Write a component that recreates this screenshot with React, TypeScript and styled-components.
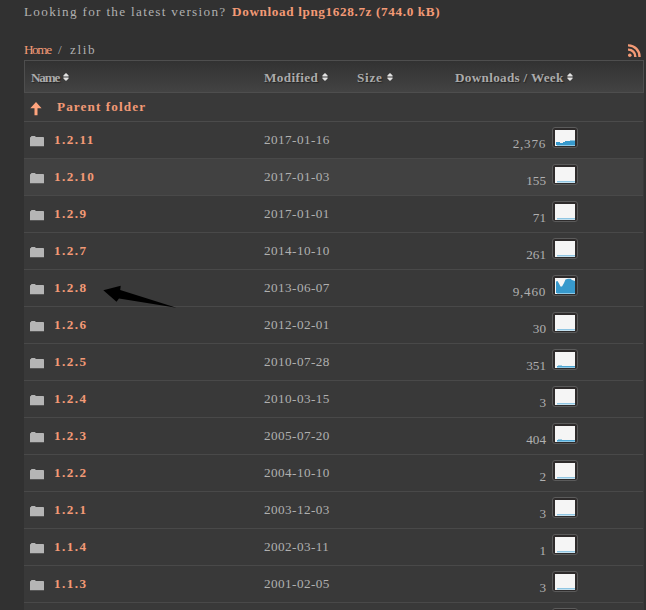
import React from "react";
import styled, { createGlobalStyle } from "styled-components";

const Global = createGlobalStyle`
  html, body { margin: 0; background: #313131; }
  body { overflow: hidden; }
  * { box-sizing: border-box; }
`;

const Page = styled.main`
  height: 610px;
  overflow: hidden;
  padding: 0 2px 0 24px;
  background: #313131;
  color: #b0b0b0;
  font: 13.2px/18px "Liberation Serif", serif;
`;

const Text = styled.span<{ $track?: number }>`
  white-space: pre;
  letter-spacing: ${(p) => p.$track ?? 0}px;
`;

const Link = styled.a<{ $track?: number; $bold?: boolean }>`
  color: #f39a76;
  white-space: pre;
  font-weight: ${(p) => (p.$bold ? 700 : 400)};
  letter-spacing: ${(p) => p.$track ?? 0}px;
`;

const Latest = styled.div`
  display: flex;
  height: 41px;
  padding-top: 3px;
`;

const LatestLabel = styled.div`
  width: 208px;
`;

const Crumbs = styled.div`
  display: flex;
  height: 19px;
  & > svg { margin: 3px 3px 0 auto; }
`;

const Crumb = styled.div<{ $w: number }>`
  width: ${(p) => p.$w}px;
`;

const Table = styled.div`
  width: 620px;
  background: #393939;
`;

const columns = `
  display: grid;
  grid-template-columns: 240px 93px 98px 189px;
`;

const HeadRow = styled.div`
  ${columns}
  grid-template-columns: 239px 93px 98px 188px;
  height: 33px;
  border: 1px solid #4e4e4e;
  background: linear-gradient(#323232, #434343);
  font-weight: 700;
  color: #ababab;
  text-shadow: 1px 1px 1px #222;
`;

const HeadCell = styled.div<{ $pad: number; $w: number }>`
  display: flex;
  padding: 8px 0 0 ${(p) => p.$pad}px;
  & > span { width: ${(p) => p.$w}px; }
  & > svg { margin-top: 4px; }
`;

const ParentRow = styled.div`
  display: flex;
  height: 29px;
  margin-right: 1px;
  padding: 5px 0 0 6px;
  border-bottom: 1px solid #4b4b4b;
  & > svg { margin: 4px 15px 0 0; }
`;

const Row = styled.div<{ $active?: boolean }>`
  ${columns}
  height: 37px;
  margin-right: 1px;
  border-bottom: 1px solid #494949;
  background: ${(p) => (p.$active ? "#414141" : "#393939")};
`;

const NameCell = styled.div`
  position: relative;
  display: flex;
  padding: 9px 0 0 6px;
  & > svg:first-child { margin: 5px 10px 0 0; }
`;

const Cell = styled.div`
  padding-top: 9px;
`;

const CountCell = styled.div`
  display: flex;
  padding-top: 5px;
`;

const Count = styled.div`
  width: 91px;
  padding-top: 8px;
  text-align: right;
`;

const Thumb = styled.div`
  width: 26px;
  height: 21px;
  margin-left: 6px;
  padding: 2px;
  border: 1px solid #5b5b5b;
  border-radius: 3px;
  background: #2e2b2b;
  & > svg { display: block; }
`;

const Pointer = styled.svg`
  position: absolute;
  left: 79px;
  top: 15px;
`;

const SortIcon = () => (
  <svg width="7" height="9" viewBox="0 0 7 9" fill="#e2e2e2">
    <path d="M3 0 5.6 2.6V3.5H.4V2.6zM.4 4.5H5.6v.9L3 8 .4 5.4z" />
  </svg>
);

const FolderIcon = () => (
  <svg width="14" height="11" viewBox="0 0 14 11" fill="#b5b5b5">
    <path d="M0 1.8Q0 1 .8 1H1L1.4 0H5l.8 1H13.2q.8 0 .8.8V10.3H0z" />
  </svg>
);

const UpIcon = () => (
  <svg width="12" height="14" viewBox="0 0 12 14" fill="#ffa47d">
    <path d="M6 0 11.6 6.2H7.5V13.3H4.5V6.2H.3z" />
  </svg>
);

const RssIcon = () => (
  <svg width="13" height="14" viewBox="0 0 13 14" fill="none" stroke="#f39a76" strokeWidth="2.4">
    <path d="M0 1.4A11.2 11.2 0 0 1 11.5 13M0 5.6A7 7 0 0 1 7.3 13" />
    <circle cx="1.8" cy="11.2" r="1.8" fill="#f39a76" stroke="none" />
  </svg>
);

const charts = {
  rising: <path d="M1 12h4v1h3v-1h2v-1h5v-.5h5V15H1z" fill="#3799cc" />,
  peak: <path d="M1 3.5 2.5 3 4 5.5 5.5 8.5H7L9 5l1.5-3.5L13 .7h2.5L17 2l3 1v12H1z" fill="#3799cc" />,
  flat: <path d="M2 14h18v1H2z" fill="#8fc5e2" />,
  low: <path d="M2 14h1v-.6h4v.6h13v1H2z" fill="#4ca5d2" />,
};

type Chart = keyof typeof charts;

const Sparkline = ({ kind }: { kind: Chart }) => (
  <Thumb>
    <svg width="20" height="16" viewBox="0 0 20 16">
      <path d="M0 0h20v16H0z" fill="#f5f5f5" />
      <path d="M2 15h18v1H2z" fill={kind === "flat" ? "#c3e0ee" : "#8fc9e6"} />
      {charts[kind]}
    </svg>
  </Thumb>
);

const rows: [string, string, string, Chart][] = [
  ["1.2.11", "2017-01-16", "2,376", "rising"],
  ["1.2.10", "2017-01-03", "155", "flat"],
  ["1.2.9", "2017-01-01", "71", "flat"],
  ["1.2.7", "2014-10-10", "261", "flat"],
  ["1.2.8", "2013-06-07", "9,460", "peak"],
  ["1.2.6", "2012-02-01", "30", "flat"],
  ["1.2.5", "2010-07-28", "351", "low"],
  ["1.2.4", "2010-03-15", "3", "flat"],
  ["1.2.3", "2005-07-20", "404", "low"],
  ["1.2.2", "2004-10-10", "2", "flat"],
  ["1.2.1", "2003-12-03", "3", "flat"],
  ["1.1.4", "2002-03-11", "1", "flat"],
  ["1.1.3", "2001-02-05", "3", "flat"],
];

const headings = [
  { label: "Name", pad: 6, w: 32, track: -1.2 },
  { label: "Modified", pad: 0, w: 58, track: 0.35 },
  { label: "Size", pad: 0, w: 30, track: 0.75 },
  { label: "Downloads / Week", pad: 0, w: 112, track: 0.3 },
];

export default function App() {
  return (
    <>
      <Global />
      <Page>
        <Latest>
          <LatestLabel><Text $track={1.31}>Looking for the latest version?</Text></LatestLabel>
          <Link $bold $track={0.63}>Download lpng1628.7z (744.0 kB)</Link>
        </Latest>
        <Crumbs>
          <Crumb $w={34}><Link $track={-1.4}>Home</Link></Crumb>
          <Crumb $w={12}>/</Crumb>
          <Text $track={1.6}>zlib</Text>
          <RssIcon />
        </Crumbs>
        <Table>
          <HeadRow>
            {headings.map((h) => (
              <HeadCell key={h.label} $pad={h.pad} $w={h.w}>
                <Text $track={h.track}>{h.label}</Text>
                <SortIcon />
              </HeadCell>
            ))}
          </HeadRow>
          <ParentRow>
            <UpIcon />
            <Link $bold $track={1.1}>Parent folder</Link>
          </ParentRow>
          {rows.map(([name, date, count, chart]) => (
            <Row key={name} $active={name === "1.2.10"}>
              <NameCell>
                <FolderIcon />
                <Link $bold $track={1.4}>{name}</Link>
                {name === "1.2.8" && (
                  <Pointer width="76" height="24" viewBox="0 0 76 24">
                    <path d="M.3 5.2 17.7.8 17.2 5 73.5 22.8 16 13.5 13.5 16.7z" fill="#000" />
                  </Pointer>
                )}
              </NameCell>
              <Cell><Text $track={0.43}>{date}</Text></Cell>
              <Cell />
              <CountCell>
                <Count><Text $track={count.length > 3 ? 0.7 : 0}>{count}</Text></Count>
                <Sparkline kind={chart} />
              </CountCell>
            </Row>
          ))}
          <Row>
            <NameCell />
            <Cell />
            <Cell />
            <CountCell>
              <Count />
              <Sparkline kind="flat" />
            </CountCell>
          </Row>
        </Table>
      </Page>
    </>
  );
}
